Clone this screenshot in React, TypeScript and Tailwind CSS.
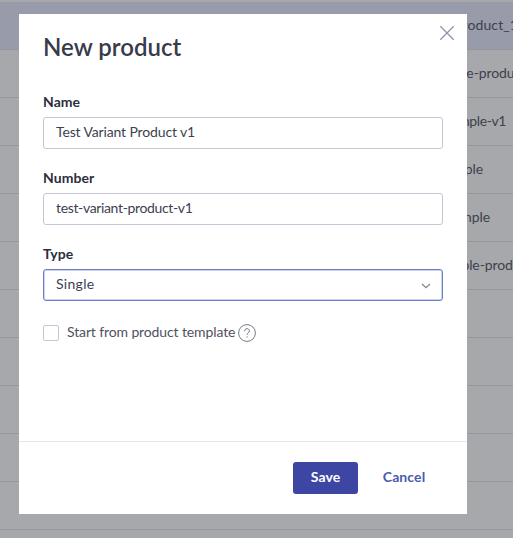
import React from "react";

type Row = { label: string; className: string };

const rows: Row[] = [
  { label: "product_1", className: "-mr-[5px] tracking-[0.1px]" },
  { label: "le-product", className: "-mr-[13px] tracking-[-0.1px]" },
  { label: "mple-v1", className: "mr-[7px] tracking-[-0.4px]" },
  { label: "ple", className: "mr-[30px] tracking-[-0.1px]" },
  { label: "mple", className: "mr-[23px] tracking-[-0.1px]" },
  { label: "ple-product", className: "-mr-[19px] tracking-[-0.1px]" },
  { label: "", className: "" },
  { label: "", className: "" },
  { label: "", className: "" },
  { label: "", className: "" },
  { label: "", className: "" },
];

function Field({ label, value, spacing }: { label: string; value: string; spacing: string }) {
  return (
    <label className="block h-[76px]">
      <span className="block h-[21px] text-[14px] leading-[12px] font-bold tracking-[0.05px] text-[#2d2e3d]">{label}</span>
      <span className="flex h-8 items-center rounded-[3px] border border-[#c6c5d6] px-3 pb-1 text-[14px] text-[#3d3f50]">
        <span className={spacing}>{value}</span>
      </span>
    </label>
  );
}

export default function App() {
  return (
    <div className="relative h-[538px] w-[513px] overflow-hidden bg-[#a7a8ac] font-['Lato',sans-serif]">
      <div className="pt-0.5">
        {rows.map((row, i) => (
          <div
            key={i}
            className={`flex h-12 items-center justify-end border-b border-[#96979d] pb-0.5 text-[14px] whitespace-nowrap text-[#3f404d] ${i === 0 ? "bg-[#989ba9]" : ""}`}
          >
            <span className={`shrink-0 ${row.className}`}>{row.label}</span>
          </div>
        ))}
      </div>

      <div className="absolute top-[14px] left-[19px] flex h-[500px] w-[448px] flex-col bg-white">
        <div className="flex h-[78px] shrink-0 items-start justify-between pt-[18px] pr-[12px] pl-6">
          <h1 className="text-[24px] leading-[30px] font-semibold tracking-[0px] text-[#393b4b]">New product</h1>
          <svg className="-mt-[7px] size-4" viewBox="0 0 16 16" fill="none" stroke="#8f94ad" strokeWidth="1.3">
            <path d="M1.3 1.3l13.4 13.4M14.7 1.3L1.3 14.7" />
          </svg>
        </div>
        <div className="grow px-6 pt-[4px]">
          <Field label="Name" value="Test Variant Product v1" spacing="tracking-[-0.14px]" />
          <Field label="Number" value="test-variant-product-v1" spacing="tracking-[-0.35px]" />
          <div className="h-[75px]">
            <div className="h-[21px] text-[14px] leading-[12px] font-bold tracking-[0.05px] text-[#2d2e3d]">Type</div>
            <div className="flex h-8 items-center justify-between rounded-[3px] border border-[#6c7dcc] pr-[11px] pb-1 pl-3 text-[14px] text-[#3d3f50] shadow-[inset_0_0_0_1px_#cdd5f2]">
              <span className="tracking-[0.3px]">Single</span>
              <svg className="mt-[5px] h-2 w-2.5" viewBox="0 0 10 8" fill="none" stroke="#85868f" strokeWidth="1.3">
                <path d="M1 2l4 3.7L9 2" />
              </svg>
            </div>
          </div>
          <div className="flex h-5 items-center text-[14px] text-[#50525f]">
            <span className="mr-2 size-4 rounded-[2px] border border-[#c6c5d6]" />
            <span className="w-[171px] pb-[3px] tracking-[-0.12px] whitespace-nowrap">Start from product template</span>
            <svg className="size-[18px]" viewBox="0 0 18 18" fill="none" stroke="#777985" strokeWidth="1">
              <circle cx="9" cy="9" r="8.4" />
              <path d="M6.6 7.2c0-3.4 4.8-3.4 4.8-.3 0 2-2.4 1.7-2.4 3.9M9 12.3v1.3" />
            </svg>
          </div>
        </div>
        <div className="flex h-[73px] shrink-0 items-start justify-end border-t border-[#e8e8ec] pt-5 pr-6 text-[14px] font-bold">
          <button className="h-8 w-[65px] rounded-[3px] bg-[#3d46a2] pb-[3px] tracking-[0.1px] text-white">Save</button>
          <button className="ml-2 mr-px h-8 w-[76px] pb-[3px] tracking-[0.1px] text-[#4a5ab3]">Cancel</button>
        </div>
      </div>
    </div>
  );
}
